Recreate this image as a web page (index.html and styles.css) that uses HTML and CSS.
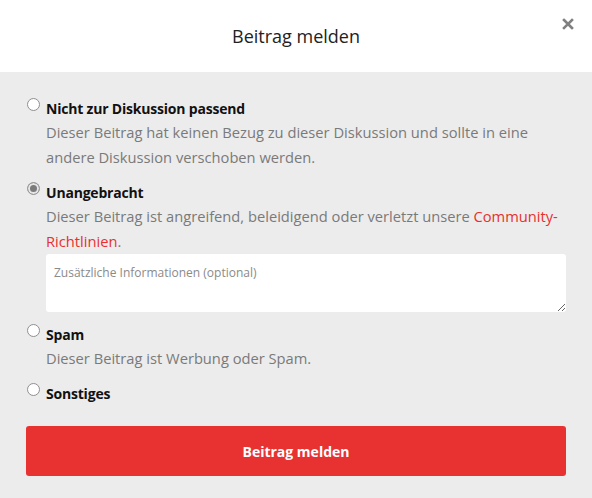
FILE: index.html
```html
<!DOCTYPE html>
<html lang="de">
<head>
<meta charset="utf-8">
<link rel="stylesheet" href="styles.css">
</head>
<body>
<div class="modal">
  <header class="modal-head">
    <h1 class="title">Beitrag melden</h1>
    <button class="close" aria-label="Schließen">
      <svg width="12" height="12" viewBox="0 0 12 12"><path d="M2 2 L10 10 M10 2 L2 10" stroke="#808080" stroke-width="2.6" stroke-linecap="square"/></svg>
    </button>
  </header>
  <form class="modal-body">
    <label class="option">
      <input type="radio" name="r" class="radio">
      <span class="text">
        <span class="label">Nicht zur Diskussion passend</span>
        <span class="desc">Dieser Beitrag hat keinen Bezug zu dieser Diskussion und sollte in eine andere Diskussion verschoben werden.</span>
      </span>
    </label>
    <label class="option">
      <input type="radio" name="r" class="radio" checked>
      <span class="text">
        <span class="label">Unangebracht</span>
        <span class="desc">Dieser Beitrag ist angreifend, beleidigend oder verletzt unsere <a href="#" class="link">Community-Richtlinien</a>.</span>
        <textarea class="info" placeholder="Zusätzliche Informationen (optional)"></textarea>
      </span>
    </label>
    <label class="option">
      <input type="radio" name="r" class="radio">
      <span class="text">
        <span class="label">Spam</span>
        <span class="desc">Dieser Beitrag ist Werbung oder Spam.</span>
      </span>
    </label>
    <label class="option">
      <input type="radio" name="r" class="radio">
      <span class="text">
        <span class="label">Sonstiges</span>
      </span>
    </label>
    <button type="button" class="submit">Beitrag melden</button>
  </form>
</div>
</body>
</html>
```
FILE: styles.css
```css
* { box-sizing: border-box; }
html, body { margin: 0; padding: 0; }
body {
  width: 592px;
  height: 498px;
  background: #ececec;
  font-family: "Open Sans", "Noto Sans", sans-serif;
  overflow: hidden;
}
.modal { display: flex; flex-direction: column; }
.modal-head {
  background: #fff;
  height: 72px;
  display: flex;
  align-items: center;
  justify-content: center;
  position: relative;
}
.title {
  margin: 0;
  font-size: 18px;
  font-weight: 400;
  color: #222;
}
.close {
  position: absolute;
  right: 18px;
  top: 18px;
  border: 0;
  background: none;
  padding: 0;
  width: 12px;
  height: 12px;
  display: flex;
}
.modal-body {
  display: flex;
  flex-direction: column;
  padding: 27px 26px 0 26px;
}
.option {
  display: flex;
  align-items: flex-start;
  gap: 6px;
  margin-bottom: 13px;
}
.radio {
  appearance: none;
  -webkit-appearance: none;
  margin: -1px 0 0 1px;
  width: 13px;
  height: 13px;
  flex: none;
  border: 1px solid #8f8f8f;
  border-radius: 50%;
  background: #fff;
}
.radio:checked {
  background: #7b7b7b;
  box-shadow: inset 0 0 0 2px #e6e6e6;
  border-color: #9a9a9a;
}
.text { display: flex; flex-direction: column; flex: 1; }
.label {
  font-size: 14px;
  font-weight: 700;
  color: #111;
  line-height: 20px;
  letter-spacing: -0.2px;
}
.desc {
  font-size: 14.7px;
  color: #7a7a7a;
  line-height: 25px;
  margin-top: 1px;
}
.link { color: #e8302f; text-decoration: none; }
.info {
  margin-top: 0;
  height: 58px;
  border: 0;
  border-radius: 3px;
  background: #fff;
  font-family: inherit;
  font-size: 12px;
  padding: 10px 8px;
  resize: vertical;
  color: #333;
}
.info::placeholder { color: #8a8a8a; }
.submit {
  margin-top: 9px;
  height: 50px;
  border: 0;
  border-radius: 3px;
  background: #e83232;
  color: #fff;
  font-family: inherit;
  font-weight: 700;
  font-size: 14px;
}
```
